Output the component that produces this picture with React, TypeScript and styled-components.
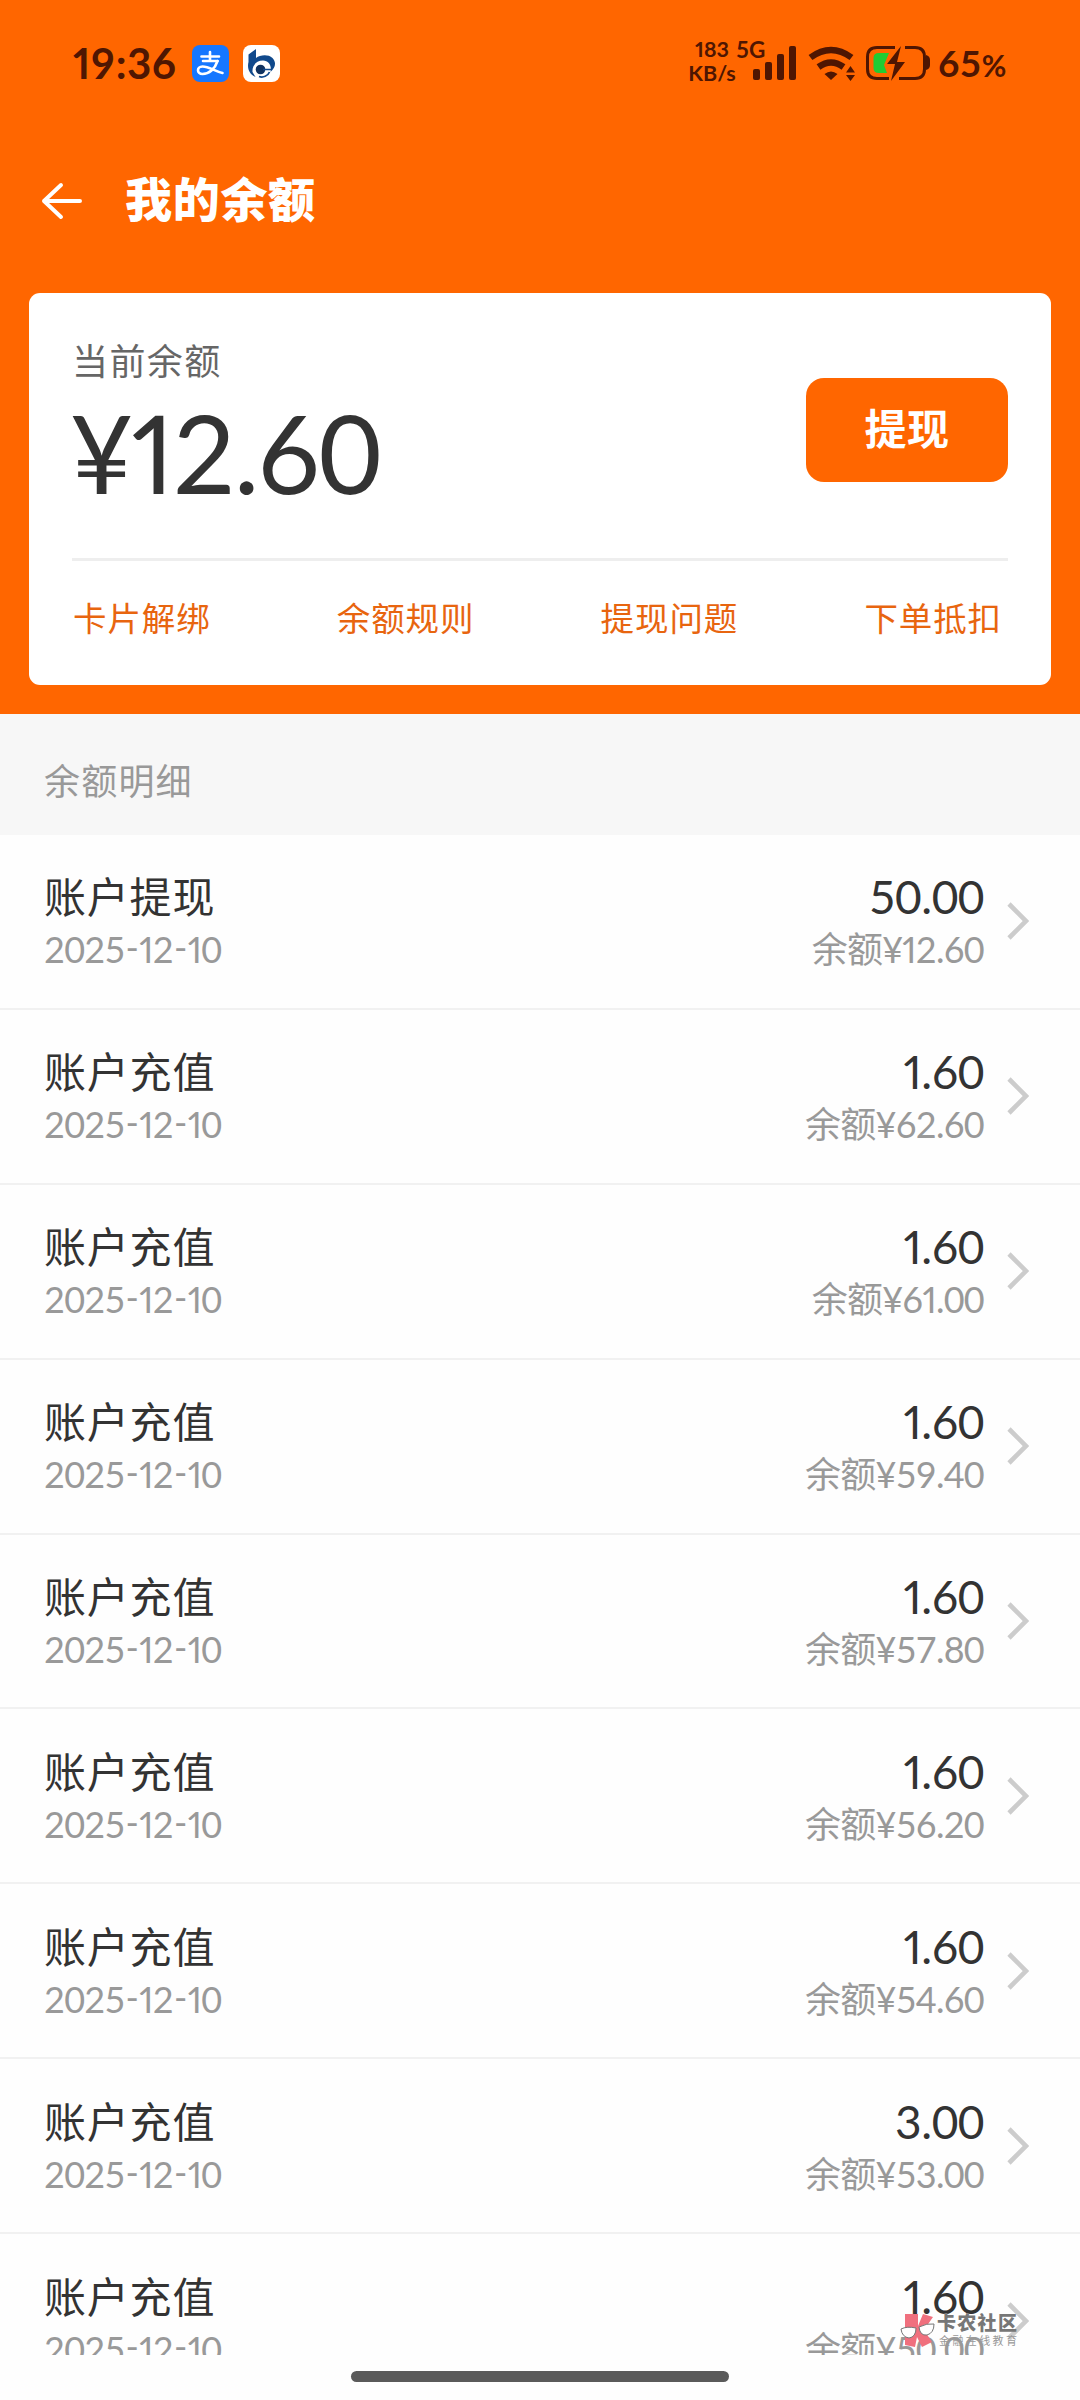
import React from "react";
import styled, { createGlobalStyle } from "styled-components";

const Global = createGlobalStyle`
  * { box-sizing: border-box; }
  body { margin: 0; background: #fff; }
`;

const sans = `Lato, "Noto Sans CJK SC", sans-serif`;
const ORANGE = "#ff6600";
const STATUS = "#4f1602";

const Screen = styled.div`
  width: 1080px;
  height: 2400px;
  display: flex;
  flex-direction: column;
  overflow: hidden;
  background: #fefefe;
  font-family: ${sans};
`;

const Hero = styled.header`
  height: 714px;
  flex: none;
  background: ${ORANGE};
  display: flex;
  flex-direction: column;
`;

const StatusBar = styled.div`
  height: 126px;
  padding: 0 70px 0 73px;
  display: flex;
  justify-content: space-between;
  align-items: center;
  color: ${STATUS};
`;

const StatusGroup = styled.div`
  display: flex;
  align-items: center;
`;

const Clock = styled.span`
  width: 119px;
  font-size: 42px;
  font-weight: 700;
  line-height: 50px;
  letter-spacing: 0.5px;
  white-space: nowrap;
`;

const AppIcon = styled.svg`
  width: 37px;
  height: 37px;
  margin-right: 14px;
`;

const Speed = styled.div`
  width: 46px;
  margin-top: -4px;
  margin-right: 1px;
  display: flex;
  flex-direction: column;
  align-items: center;
  font-size: 21.5px;
  font-weight: 700;
  line-height: 24px;
`;

const Network = styled.div`
  width: 64px;
  height: 50px;
  display: flex;
  font-size: 22.5px;
  font-weight: 700;
  line-height: 23px;
`;

const StatusGlyphs = styled.svg`
  width: 180px;
  height: 40px;
  margin-left: -48px;
`;

const Battery = styled.span`
  width: 72px;
  margin-left: 6px;
  padding-top: 2px;
  font-size: 37px;
  font-weight: 700;
  line-height: 44px;
  letter-spacing: 0.4px;
  white-space: nowrap;
  small { font-size: 30px; }
`;

const NavBar = styled.div`
  height: 167px;
  padding: 0 40px 18px;
  display: flex;
  align-items: center;
`;

const BackIcon = styled.svg`
  width: 44px;
  height: 38px;
  margin-right: 41px;
`;

const Title = styled.h1`
  margin: 0;
  padding-bottom: 4px;
  font-size: 47px;
  line-height: 60px;
  font-weight: 900;
  letter-spacing: 0.7px;
  color: #fff;
`;

const Card = styled.section`
  width: 1022px;
  height: 392px;
  margin: 0 29px;
  padding: 0 43px;
  border-radius: 11px;
  background: #fff;
`;

const BalanceRow = styled.div`
  height: 268px;
  display: flex;
  justify-content: space-between;
  align-items: flex-start;
  border-bottom: 3px solid #eeeeee;
`;

const Balance = styled.div`
  padding: 43px 0 0;
  display: flex;
  flex-direction: column;
`;

const BalanceLabel = styled.span`
  font-size: 36px;
  line-height: 50px;
  letter-spacing: 1.4px;
  color: #666;
`;

const BalanceAmount = styled.span`
  margin-left: -2px;
  font-size: 109px;
  line-height: 132px;
  letter-spacing: -2px;
  color: #333;
`;

const NarrowOne = styled.span`
  font-feature-settings: "pnum" 1;
`;

const Dash = styled.span`
  position: relative;
  top: -0.06em;
  margin: 0 0.03em;
`;

const Withdraw = styled.button`
  width: 202px;
  height: 104px;
  margin-top: 85px;
  padding: 0 0 7px;
  border: 0;
  border-radius: 18px;
  background: ${ORANGE};
  color: #fff;
  font-family: ${sans};
  font-size: 42px;
  font-weight: 700;
  letter-spacing: 0.6px;
`;

const Links = styled.nav`
  height: 121px;
  padding: 0 6px 7px 1px;
  display: flex;
  justify-content: space-between;
  align-items: center;
`;

const LinkItem = styled.a`
  font-size: 33.5px;
  line-height: 48px;
  letter-spacing: 0.9px;
  color: #e8650f;
`;

const SectionTitle = styled.h2`
  height: 121px;
  flex: none;
  margin: 0;
  padding: 9px 44px 0;
  display: flex;
  align-items: center;
  background: #f7f7f7;
  color: #999;
  font-size: 36px;
  font-weight: 400;
  letter-spacing: 1.2px;
`;

const List = styled.main`
  height: 1520px;
  flex: none;
  overflow: hidden;
`;

const Row = styled.div`
  height: 174.9px;
  padding: 0 51px 0 44px;
  display: flex;
  align-items: center;
  border-bottom: 2px solid #f1f1f1;
`;

const Column = styled.div<{ $end?: boolean }>`
  flex: 1;
  display: flex;
  flex-direction: column;
  align-items: ${(p) => (p.$end ? "flex-end" : "flex-start")};
`;

const RowTitle = styled.span`
  font-size: 42px;
  line-height: 56px;
  letter-spacing: 0.8px;
  color: #333;
`;

const Amount = styled.span`
  font-size: 46px;
  line-height: 56px;
  letter-spacing: -0.5px;
  color: #333;
`;

const Sub = styled.span`
  font-size: 36px;
  line-height: 48px;
  letter-spacing: -0.75px;
  color: #999;
`;

const Chevron = styled.svg`
  width: 22px;
  height: 38px;
  margin-left: 23px;
`;

const Footer = styled.footer`
  flex: 1;
  display: flex;
  justify-content: center;
  align-items: flex-start;
  padding-top: 16px;
`;

const HomeBar = styled.div`
  width: 378px;
  height: 11px;
  border-radius: 6px;
  background: #5a5a5a;
`;

const Watermark = styled.div`
  position: absolute;
  left: 900px;
  top: 2312px;
  display: flex;
  align-items: flex-start;
  gap: 2px;
`;

const WatermarkText = styled.div`
  display: flex;
  flex-direction: column;
  color: #777;
  font-size: 19px;
  font-weight: 900;
  line-height: 22px;
  letter-spacing: 1.3px;
  white-space: nowrap;
  small {
    padding-left: 2px;
    font-size: 11px;
    font-weight: 400;
    line-height: 14px;
    letter-spacing: 2.4px;
    color: #999;
  }
`;

const rows = [
  ["账户提现", "50.00", "12.60"],
  ["账户充值", "1.60", "62.60"],
  ["账户充值", "1.60", "61.00"],
  ["账户充值", "1.60", "59.40"],
  ["账户充值", "1.60", "57.80"],
  ["账户充值", "1.60", "56.20"],
  ["账户充值", "1.60", "54.60"],
  ["账户充值", "3.00", "53.00"],
  ["账户充值", "1.60", "50.00"],
];

/* Tabular figures, except for a narrow 1 and a raised hyphen. */
const Digits = ({ children }: { children: string }) => (
  <span>
    {children.split(/([1-])/).map((part, i) => {
      if (part === "1") return <NarrowOne key={i}>1</NarrowOne>;
      if (part === "-") return <Dash key={i}>-</Dash>;
      return part;
    })}
  </span>
);

const AlipayIcon = () => (
  <AppIcon viewBox="0 0 37 37">
    <rect width="37" height="37" rx="8" fill="#1677ff" />
    <g fill="none" stroke="#fff" strokeWidth="2.6" strokeLinecap="round">
      <path d="M9.500 11.500H27M18 7V16M11 16H25.500" />
      <path d="M25.500 16C23 24 17 29 10.500 29C4.500 29 4.500 21.500 10.500 21.500C17 21.500 23 26.500 30.500 28" />
    </g>
  </AppIcon>
);

const BankIcon = () => (
  <AppIcon viewBox="0 0 37 37">
    <rect width="37" height="37" rx="8" fill="#fff" />
    <path
      d="M13 4V13C17 10 25 9 29.500 13C34 18 32 23 27.500 27C29 21 26 15.500 20 15.500C13 15.500 9 21 9.500 27L12.500 32C6 29 4 23 5.500 17V9.500Z"
      fill="#10498c"
    />
    <circle cx="17.500" cy="24.500" r="4.800" fill="#10325f" />
    <path d="M20 24.500H28M26.500 27C25 31 20 33 16 31.500" fill="none" stroke="#10498c" strokeWidth="1.700" />
  </AppIcon>
);

export default function App() {
  return (
    <Screen>
      <Global />
      <Hero>
        <StatusBar>
          <StatusGroup>
            <Clock>
              <Digits>19:36</Digits>
            </Clock>
            <AlipayIcon />
            <BankIcon />
          </StatusGroup>
          <StatusGroup>
            <Speed>
              <Digits>183</Digits>
              <span>KB/s</span>
            </Speed>
            <Network>5G</Network>
            <StatusGlyphs viewBox="752 43 180 40" fill={STATUS}>
              <rect x="753" y="69" width="7" height="11" rx="2" />
              <rect x="765" y="62" width="7" height="18" rx="2" />
              <rect x="777" y="54" width="7" height="26" rx="2" />
              <rect x="789" y="46" width="7" height="34" rx="2" />
              <g fill="none" stroke={STATUS} strokeWidth="6.500">
                <path d="M810.500 57.500Q831 42.500 851.500 57.500" />
                <path d="M818.500 67Q831 58 843.500 67" />
              </g>
              <path d="M824.500 74Q831 69 837.500 74L831 80Z" />
              <path d="M846 72.500L850.500 66L855 72.500ZM846 75L850.500 81L855 75Z" />
              <path d="M889 53H879Q873.500 53 873.500 58V68Q873.500 73 879 73H887L884 65Z" fill="#22cc33" />
              <g fill="none" stroke={STATUS} strokeWidth="3">
                <path d="M895 47.500H877Q867.500 47.500 867.500 57V69Q867.500 78.500 877 78.500H889" />
                <path d="M905 47.500H915Q924.500 47.500 924.500 57V69Q924.500 78.500 915 78.500H899" />
              </g>
              <path d="M926 55Q930 56 930 60V65Q930 69 926 70Z" />
              <path d="M901 46L887 64H895L891 81L905 62H897Z" />
            </StatusGlyphs>
            <Battery>
              65<small>%</small>
            </Battery>
          </StatusGroup>
        </StatusBar>
        <NavBar>
          <BackIcon viewBox="0 0 44 38" fill="none" stroke="#fff" strokeWidth="4" strokeLinecap="round" strokeLinejoin="round">
            <path d="M40 19H4M21 3L4 19L21 35" />
          </BackIcon>
          <Title>我的余额</Title>
        </NavBar>
        <Card>
          <BalanceRow>
            <Balance>
              <BalanceLabel>当前余额</BalanceLabel>
              <BalanceAmount>
                <Digits>¥12.60</Digits>
              </BalanceAmount>
            </Balance>
            <Withdraw>提现</Withdraw>
          </BalanceRow>
          <Links>
            {["卡片解绑", "余额规则", "提现问题", "下单抵扣"].map((t) => (
              <LinkItem key={t}>{t}</LinkItem>
            ))}
          </Links>
        </Card>
      </Hero>
      <SectionTitle>余额明细</SectionTitle>
      <List>
        {rows.map(([title, amount, balance], i) => (
          <Row key={i}>
            <Column>
              <RowTitle>{title}</RowTitle>
              <Sub>
                <Digits>2025-12-10</Digits>
              </Sub>
            </Column>
            <Column $end>
              <Amount>
                <Digits>{amount}</Digits>
              </Amount>
              <Sub>
                <Digits>{`余额¥${balance}`}</Digits>
              </Sub>
            </Column>
            <Chevron viewBox="0 0 22 38" fill="none" stroke="#ccc" strokeWidth="4.6">
              <path d="M2 2L19 19L2 36" />
            </Chevron>
          </Row>
        ))}
      </List>
      <Footer>
        <HomeBar />
      </Footer>
      <Watermark>
        <svg width="35" height="36" viewBox="0 0 35 36">
          <path d="M5 2H18V14L23 2L33 5L24 18L32 30L22 35L17 25L15 35L5 33Z" fill="#f0707e" />
          <path d="M1 17Q7 14 16 16Q16 25 9 26Q2 25 1 17ZM19 15Q27 11 34 12Q34 21 27 23Q20 24 19 15Z" fill="#fff" stroke="#777" strokeWidth="1" />
        </svg>
        <WatermarkText>
          卡农社区
          <small>金融在线教育</small>
        </WatermarkText>
      </Watermark>
    </Screen>
  );
}
